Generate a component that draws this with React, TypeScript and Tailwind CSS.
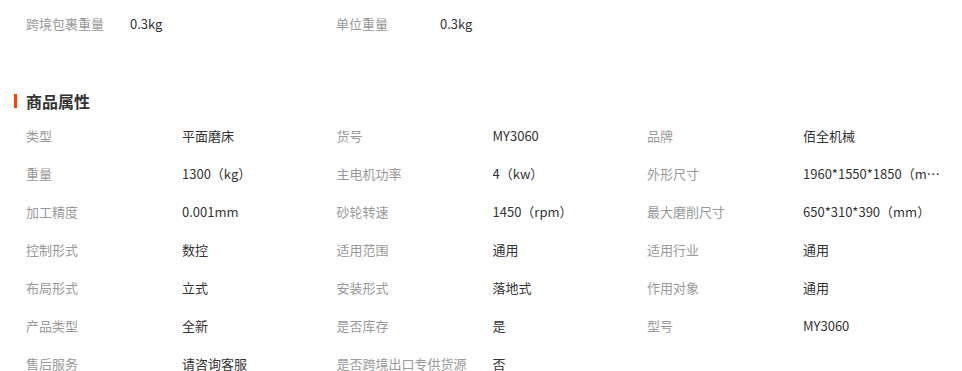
const topRow = [
  { label: '跨境包裹重量', value: '0.3kg' },
  { label: '单位重量', value: '0.3kg' },
];

const props: [string, string][][] = [
  [['类型', '平面磨床'], ['货号', 'MY3060'], ['品牌', '佰全机械']],
  [['重量', '1300（kg）'], ['主电机功率', '4（kw）'], ['外形尺寸', '1960*1550*1850（mm）']],
  [['加工精度', '0.001mm'], ['砂轮转速', '1450（rpm）'], ['最大磨削尺寸', '650*310*390（mm）']],
  [['控制形式', '数控'], ['适用范围', '通用'], ['适用行业', '通用']],
  [['布局形式', '立式'], ['安装形式', '落地式'], ['作用对象', '通用']],
  [['产品类型', '全新'], ['是否库存', '是'], ['型号', 'MY3060']],
  [['售后服务', '请咨询客服'], ['是否跨境出口专供货源', '否']],
];

export default function App() {
  return (
    <div
      className="w-[962px] bg-white text-[13px] leading-[20px]"
      style={{ fontFamily: '"Microsoft YaHei", "Noto Sans CJK SC", sans-serif' }}
    >
      <div className="flex pl-[26px] pt-[5px] h-[43px]">
        {topRow.map((item) => (
          <div key={item.label} className="flex items-center w-[310px] h-[38px]">
            <span className="w-[104px] text-[#999999]">{item.label}</span>
            <span className="text-[#333333]">{item.value}</span>
          </div>
        ))}
      </div>

      <div className="mt-[48px] flex items-center h-[20px] pl-[14px]">
        <span className="w-[3px] h-[14px] bg-[#ff4400]" />
        <span className="ml-[9px] text-[16px] font-bold text-[#333333] leading-[20px]">商品属性</span>
      </div>

      <div className="mt-[6px] pl-[26px]">
        {props.map((row, i) => (
          <div key={i} className="flex h-[38px] items-center">
            {row.map(([label, value]) => (
              <div key={label} className="flex items-center w-[310.5px]">
                <span className="w-[156px] text-[#999999] whitespace-nowrap">{label}</span>
                <span className="w-[140px] text-[#333333] truncate" title={value}>{value}</span>
              </div>
            ))}
          </div>
        ))}
      </div>
    </div>
  );
}
